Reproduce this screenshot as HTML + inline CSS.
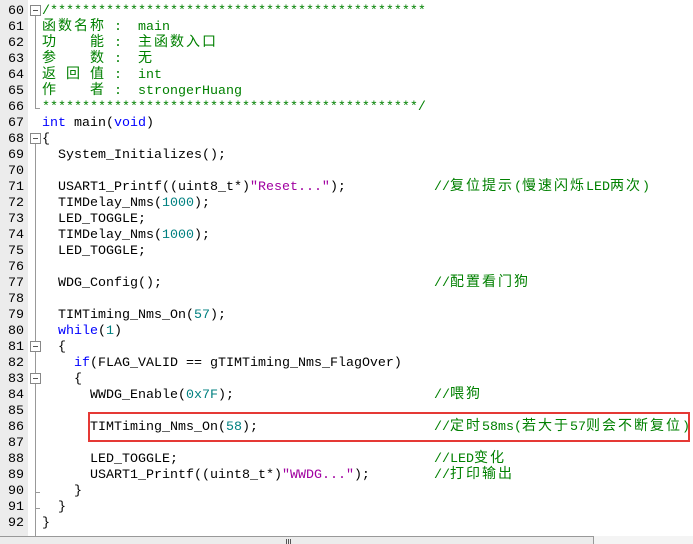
<!DOCTYPE html>
<html><head><meta charset="utf-8"><style>
body{margin:0;width:693px;height:544px;background:#fff;position:relative;overflow:hidden;font-family:"Liberation Mono",monospace;font-size:13.33px;}
.g{position:absolute;left:0;top:0;width:28px;height:536px;background:#ececec;}
.n{position:absolute;left:0;width:24px;text-align:right;color:#000;height:16px;line-height:16px;}
.l{position:absolute;left:42px;height:16px;line-height:16px;white-space:pre;color:#000;}
.cm{position:absolute;left:434px;height:16px;line-height:16px;white-space:pre;color:#008000;}
.k{color:#0000ff}.s{color:#a000a0}.d{color:#008080}.gr{color:#008000}
.c,.cc{font-family:"Noto Sans CJK SC",sans-serif;font-size:14px;letter-spacing:2px;line-height:8px;}
.b{position:absolute;left:30px;width:9px;height:9px;border:1px solid #888;background:#fff;}
.b:after{content:"";position:absolute;left:2px;top:4px;width:5px;height:1px;background:#555;}
.v{position:absolute;left:35px;width:1px;background:#999;}
.t{position:absolute;left:35px;width:5px;height:1px;background:#999;}
#w{position:absolute;left:0;top:2px;width:693px;height:534px;}
</style></head><body>
<div class="g"></div>
<div id="w">
<div class="n" style="top:2px">60</div><div class="n" style="top:18px">61</div><div class="n" style="top:34px">62</div><div class="n" style="top:50px">63</div><div class="n" style="top:66px">64</div><div class="n" style="top:82px">65</div><div class="n" style="top:98px">66</div><div class="n" style="top:114px">67</div><div class="n" style="top:130px">68</div><div class="n" style="top:146px">69</div><div class="n" style="top:162px">70</div><div class="n" style="top:178px">71</div><div class="n" style="top:194px">72</div><div class="n" style="top:210px">73</div><div class="n" style="top:226px">74</div><div class="n" style="top:242px">75</div><div class="n" style="top:258px">76</div><div class="n" style="top:274px">77</div><div class="n" style="top:290px">78</div><div class="n" style="top:306px">79</div><div class="n" style="top:322px">80</div><div class="n" style="top:338px">81</div><div class="n" style="top:354px">82</div><div class="n" style="top:370px">83</div><div class="n" style="top:386px">84</div><div class="n" style="top:402px">85</div><div class="n" style="top:418px">86</div><div class="n" style="top:434px">87</div><div class="n" style="top:450px">88</div><div class="n" style="top:466px">89</div><div class="n" style="top:482px">90</div><div class="n" style="top:498px">91</div><div class="n" style="top:514px">92</div>

<div class="v" style="top:10px;height:96px"></div><div class="t" style="top:106px"></div>
<div class="v" style="top:138px;height:398px"></div>
<div class="t" style="top:490px"></div><div class="t" style="top:506px"></div>
<div class="b" style="top:3px"></div><div class="b" style="top:131px"></div><div class="b" style="top:339px"></div><div class="b" style="top:371px"></div>

<div class="l gr" style="top:2px">/***********************************************</div>
<div class="l gr" style="top:18px"><span class="c">函数名称</span> :  main</div>
<div class="l gr" style="top:34px"><span class="c">功</span>    <span class="c">能</span> :  <span class="c">主函数入口</span></div>
<div class="l gr" style="top:50px"><span class="c">参</span>    <span class="c">数</span> :  <span class="c">无</span></div>
<div class="l gr" style="top:66px"><span class="c">返</span> <span class="c">回</span> <span class="c">值</span> :  int</div>
<div class="l gr" style="top:82px"><span class="c">作</span>    <span class="c">者</span> :  strongerHuang</div>
<div class="l gr" style="top:98px">***********************************************/</div>
<div class="l" style="top:114px"><span class="k">int</span> main(<span class="k">void</span>)</div>
<div class="l" style="top:130px">{</div>
<div class="l" style="top:146px">  System_Initializes();</div>
<div class="l" style="top:178px">  USART1_Printf((uint8_t*)<span class="s">"Reset..."</span>);</div>
<div class="cm" style="top:178px">//<span class="cc">复位提示</span>(<span class="cc">慢速闪烁</span>LED<span class="cc">两次</span>)</div>
<div class="l" style="top:194px">  TIMDelay_Nms(<span class="d">1000</span>);</div>
<div class="l" style="top:210px">  LED_TOGGLE;</div>
<div class="l" style="top:226px">  TIMDelay_Nms(<span class="d">1000</span>);</div>
<div class="l" style="top:242px">  LED_TOGGLE;</div>
<div class="l" style="top:274px">  WDG_Config();</div>
<div class="cm" style="top:274px">//<span class="cc">配置看门狗</span></div>
<div class="l" style="top:306px">  TIMTiming_Nms_On(<span class="d">57</span>);</div>
<div class="l" style="top:322px">  <span class="k">while</span>(<span class="d">1</span>)</div>
<div class="l" style="top:338px">  {</div>
<div class="l" style="top:354px">    <span class="k">if</span>(FLAG_VALID == gTIMTiming_Nms_FlagOver)</div>
<div class="l" style="top:370px">    {</div>
<div class="l" style="top:386px">      WWDG_Enable(<span class="d">0x7F</span>);</div>
<div class="cm" style="top:386px">//<span class="cc">喂狗</span></div>
<div class="l" style="top:418px">      TIMTiming_Nms_On(<span class="d">58</span>);</div>
<div class="cm" style="top:418px">//<span class="cc">定时</span>58ms(<span class="cc">若大于</span>57<span class="cc">则会不断复位</span>)</div>
<div class="l" style="top:450px">      LED_TOGGLE;</div>
<div class="cm" style="top:450px">//LED<span class="cc">变化</span></div>
<div class="l" style="top:466px">      USART1_Printf((uint8_t*)<span class="s">"WWDG..."</span>);</div>
<div class="cm" style="top:466px">//<span class="cc">打印输出</span></div>
<div class="l" style="top:482px">    }</div>
<div class="l" style="top:498px">  }</div>
<div class="l" style="top:514px">}</div>
</div>

<div style="position:absolute;left:88px;top:412px;width:598px;height:26px;border:2px solid #e53935;"></div>

<div style="position:absolute;left:0;top:536px;width:693px;height:8px;background:#f4f4f4;"></div>
<div style="position:absolute;left:0;top:536px;width:594px;height:8px;background:#ececec;border-top:1px solid #999;border-right:1px solid #999;box-sizing:border-box;"></div>
<div style="position:absolute;left:286px;top:539px;width:1px;height:5px;background:#555;"></div>
<div style="position:absolute;left:288px;top:539px;width:1px;height:5px;background:#555;"></div>
<div style="position:absolute;left:290px;top:539px;width:1px;height:5px;background:#555;"></div>
</body></html>
